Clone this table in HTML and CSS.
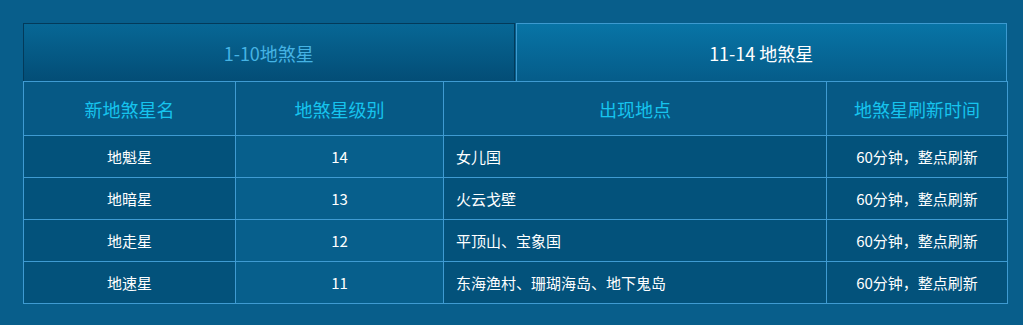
FILE: index.html
```html
<!DOCTYPE html>
<html lang="zh-CN">
<head>
<meta charset="utf-8">
<title>地煞星</title>
<link rel="stylesheet" href="styles.css">
</head>
<body>
<div class="panel">
  <div class="tabs">
    <div class="tab">1-10地煞星</div>
    <div class="tab active">11-14 地煞星</div>
  </div>
  <table class="stars">
    <colgroup>
      <col class="c-name">
      <col class="c-level">
      <col class="c-place">
      <col class="c-time">
    </colgroup>
    <thead>
      <tr>
        <th>新地煞星名</th>
        <th>地煞星级别</th>
        <th>出现地点</th>
        <th>地煞星刷新时间</th>
      </tr>
    </thead>
    <tbody>
      <tr><td class="name">地魁星</td><td class="level">14</td><td class="place">女儿国</td><td class="time">60分钟，整点刷新</td></tr>
      <tr><td class="name">地暗星</td><td class="level">13</td><td class="place">火云戈壁</td><td class="time">60分钟，整点刷新</td></tr>
      <tr><td class="name">地走星</td><td class="level">12</td><td class="place">平顶山、宝象国</td><td class="time">60分钟，整点刷新</td></tr>
      <tr><td class="name">地速星</td><td class="level">11</td><td class="place">东海渔村、珊瑚海岛、地下鬼岛</td><td class="time">60分钟，整点刷新</td></tr>
    </tbody>
  </table>
</div>
</body>
</html>
```

FILE: styles.css
```css
html, body {
  margin: 0;
  padding: 0;
  background: #085e8b;
  font-family: "Noto Sans CJK SC", "Microsoft YaHei", sans-serif;
}

.panel {
  padding: 23px 0 0 23px;
  width: 985px;
}

.tabs {
  display: flex;
  width: 984px;
}

.tab {
  flex: 1;
  box-sizing: border-box;
  height: 58px;
  display: flex;
  align-items: center;
  justify-content: center;
  font-size: 18px;
  color: #45b3e4;
  background: linear-gradient(#076795, #034d76);
  border: 1px solid #033a5a;
  border-bottom: none;
}

.tab.active {
  margin-left: 1px;
  color: #ffffff;
  background: linear-gradient(#0874a6, #055c89);
  border-color: #3c9ad0;
}

.stars {
  border-collapse: collapse;
  width: 985px;
  table-layout: fixed;
  border: 1px solid #3f9bd2;
}

.c-name { width: 212px; }
.c-level { width: 208px; }
.c-place { width: 383px; }
.c-time { width: 181px; }

.stars th,
.stars td {
  border: 1px solid #3f9bd2;
  padding: 0;
}

.stars th {
  height: 53px;
  font-size: 18px;
  font-weight: normal;
  color: #16c4ee;
  background: #065985;
  text-align: center;
}

.stars td {
  height: 41px;
  font-size: 15px;
  color: #ffffff;
  background: #03527b;
  text-align: center;
}

.stars td.level {
  background: #075f8c;
}

.stars td.place {
  text-align: left;
  padding-left: 12px;
}
```
